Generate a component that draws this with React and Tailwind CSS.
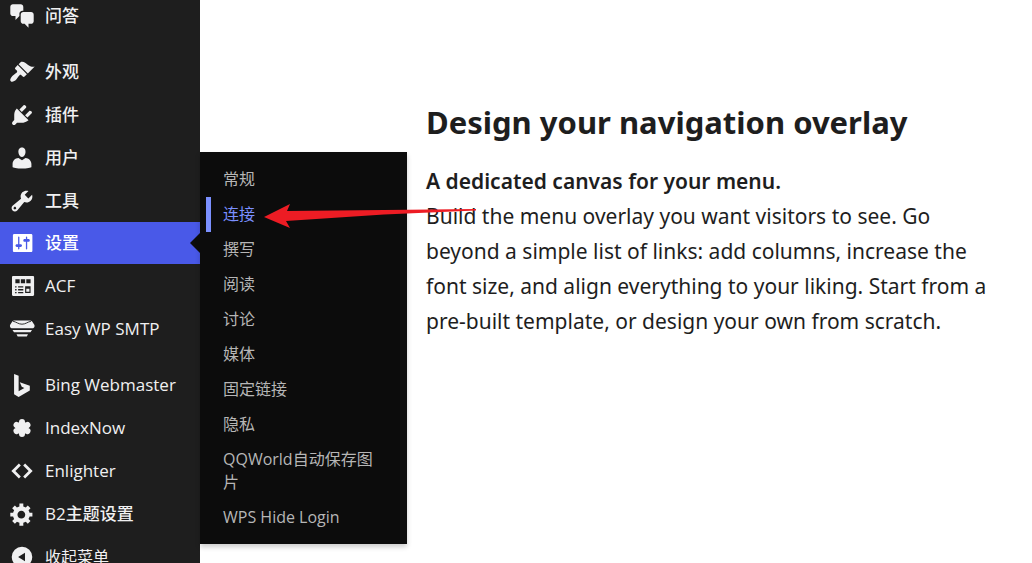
import React, { useState } from 'react';
import clsx from 'clsx';

const iconPaths = {
    chat: 'M11 6h-.82C9.07 6 8 7.2 8 8.16V10l-3 3v-3H3c-1.1 0-2-.9-2-2V3c0-1.1.9-2 2-2h6c1.1 0 2 .9 2 2v3zm0 1h6c1.1 0 2 .9 2 2v5c0 1.1-.9 2-2 2h-2v3l-3-3h-1c-1.1 0-2-.9-2-2V9c0-1.1.9-2 2-2z',
    brush: 'M14.48 11.06L7.41 3.99l1.5-1.5c.5-.56 2.3-.47 3.51.32 1.21.8 1.43 1.28 2.91 2.1 1.18.64 2.45 1.26 4.45.85zm-.71.71L6.7 4.7 4.93 6.47c-.39.39-.39 1.02 0 1.41l1.06 1.06c.39.39.39 1.03 0 1.42-.6.6-1.43 1.11-2.21 1.69-.35.26-.7.53-1.01.84C1.43 14.23.4 16.08 1.4 17.07c.99 1 2.84-.03 4.18-1.36.31-.31.58-.66.85-1.02.57-.78 1.08-1.61 1.69-2.21.39-.39 1.02-.39 1.41 0l1.06 1.06c.39.39 1.02.39 1.41 0z',
    plug: 'M13.11 4.36L9.87 7.6 8 5.73l3.24-3.24c.35-.34 1.05-.2 1.56.32.52.51.66 1.21.31 1.55zm-8 1.77l.91-1.12 9.01 9.01-1.19.84c-.71.71-2.63 1.16-3.82 1.16H6.14L4.9 17.26c-.59.59-1.54.59-2.12 0-.59-.58-.59-1.53 0-2.12l1.24-1.24v-3.88c0-1.13.4-3.19 1.09-3.89zm7.26 3.97l3.24-3.24c.34-.35 1.04-.21 1.55.31.52.51.66 1.21.31 1.55l-3.24 3.25z',
    user: 'M10 9.25c-2.27 0-2.73-3.44-2.73-3.44C7 4.02 7.82 2 9.97 2c2.16 0 2.98 2.02 2.71 3.81 0 0-.41 3.44-2.68 3.44zM7.28 10L10 11.82 12.72 10c2.39 0 4.52 2.33 4.52 4.53v2.49s-3.65 1.13-7.24 1.13c-3.65 0-7.24-1.13-7.24-1.13v-2.49c0-2.25 1.94-4.53 4.52-4.53z',
    wrench: 'M16.68 9.77c-1.34 1.34-3.3 1.67-4.95.99l-5.41 6.52c-.99.99-2.59.99-3.58 0s-.99-2.59 0-3.57l6.52-5.42c-.68-1.65-.35-3.61.99-4.95 1.28-1.28 3.12-1.62 4.72-1.06l-2.89 2.89 2.82 2.82 2.86-2.87c.53 1.58.18 3.39-1.08 4.65zM3.81 16.21c.4.39 1.04.39 1.43 0 .4-.4.4-1.04 0-1.43-.39-.4-1.03-.4-1.43 0-.39.39-.39 1.03 0 1.43z',
    settings: 'M18 16V4c0-.55-.45-1-1-1H4c-.55 0-1 .45-1 1v12c0 .55.45 1 1 1h13c.55 0 1-.45 1-1zM8 11h1c.55 0 1 .45 1 1s-.45 1-1 1H8v1.5c0 .28-.22.5-.5.5s-.5-.22-.5-.5V13H6c-.55 0-1-.45-1-1s.45-1 1-1h1V5.5c0-.28.22-.5.5-.5s.5.22.5.5V11zm5-2h-1c-.55 0-1-.45-1-1s.45-1 1-1h1V5.5c0-.28.22-.5.5-.5s.5.22.5.5V7h1c.55 0 1 .45 1 1s-.45 1-1 1h-1v5.5c0 .28-.22.5-.5.5s-.5-.22-.5-.5V9z',
    gear: 'M18 12h-2.18c-.17.7-.44 1.35-.81 1.93l1.54 1.54-2.1 2.1-1.54-1.54c-.58.36-1.23.63-1.91.79V19H8v-2.18c-.68-.16-1.33-.43-1.91-.79l-1.54 1.54-2.12-2.12 1.54-1.54c-.36-.58-.63-1.23-.79-1.91H1V9.03h2.17c.16-.7.44-1.35.8-1.94L2.43 5.55l2.1-2.1 1.54 1.54c.58-.37 1.24-.64 1.93-.81V2h3v2.18c.68.16 1.33.43 1.91.79l1.54-1.54 2.12 2.12-1.54 1.54c.36.59.64 1.24.8 1.94H18V12zm-8.5 1.5c1.66 0 3-1.34 3-3s-1.34-3-3-3-3 1.34-3 3 1.34 3 3 3z',
    acf: 'M3.2 2.300h15.200c.5 0 .9.4.9.9v13.600c0 .5-.4.9-.9.9H3.200c-.5 0-.9-.4-.9-.9V3.200c0-.5.4-.9.9-.9zM4.900 4.900v2.900h3.300V4.900zM9.100 4.900v2.900h3.300V4.900zM13.300 4.900v2.900h3.300V4.900zM4.700 10.200v1h1.100v-1zM7 10.200v1h4v-1zM4.700 12.400v1h1.100v-1zM7 12.400v1h4v-1zM4.700 14.600v1h1.100v-1zM7 14.600v1h4v-1zM12.400 10.200v5.200h4.200v-5.200zM13.300 12.200h2.400v2.300h-2.400z',
    bing: 'M3.900 1.500l3.500 1.300v12l4.400-2.500-2-1-1.500-3.500 7.700 2.800v3.700l-8.600 4.900-3.500-2z',
    code: 'M7.6 4.2l1.5 1.5L4.9 10l4.2 4.3-1.5 1.5L1.8 10zM12.4 4.2L18.2 10l-5.8 5.8-1.5-1.5 4.2-4.3-4.2-4.3z',
    collapse: 'M10 2.1a7.9 7.9 0 1 1 0 15.8a7.9 7.9 0 0 1 0-15.8zM12.3 6.800L7 10l5.300 3.200z',
};

const menuGroups = [
    [{ label: '问答', icon: 'chat' }],
    [
        { label: '外观', icon: 'brush' },
        { label: '插件', icon: 'plug' },
        { label: '用户', icon: 'user' },
        { label: '工具', icon: 'wrench' },
        { label: '设置', icon: 'settings', active: true },
        { label: 'ACF', icon: 'acf' },
        { label: 'Easy WP SMTP', icon: 'smtp' },
    ],
    [
        { label: 'Bing Webmaster', icon: 'bing' },
        { label: 'IndexNow', icon: 'indexnow' },
        { label: 'Enlighter', icon: 'code' },
        { label: 'B2主题设置', icon: 'gear' },
    ],
];

const settingsItems = ['常规', '连接', '撰写', '阅读', '讨论', '媒体', '固定链接', '隐私', 'QQWorld自动保存图片', 'WPS Hide Login'];

function MenuIcon({ name }) {
    if (name === 'smtp') {
        return (
            <svg viewBox="0 0 26 26" className="size-[26px] shrink-0" fill="currentColor" aria-hidden="true">
                <path d="M5.500 4.500h15c1.500 0 2.300.5 3 1.500l1.800 2.800c.8 1.700-.4 3.400-2.300 3.400H3.500C1.600 12.200.4 10.500 1.200 8.800L3 6c.7-1 1.200-1.500 2.500-1.500z" />
                <path d="M4 5.200c3.500.8 5.500 3 9 3s5.500-2.200 9-3" fill="none" stroke="#1e1e1e" strokeWidth="0.9" />
                <path d="M3.500 14h19.500l-1.500 2.300H5zM7.500 18.200h11.500l-1.200 2.300H8.700z" />
            </svg>
        );
    }
    if (name === 'indexnow') {
        return (
            <svg viewBox="0 0 26 26" className="size-[26px] shrink-0" fill="currentColor" stroke="currentColor" aria-hidden="true">
                <circle cx="13" cy="13" r="6" />
                <path d="M13 7v12M7.500 10l11 6M18.500 10l-11 6" strokeWidth="6" strokeLinecap="round" />
            </svg>
        );
    }
    return (
        <svg viewBox="0 0 20 20" className="size-[26px] shrink-0" fill="currentColor" fillRule="evenodd" aria-hidden="true">
            <path d={iconPaths[name]} />
        </svg>
    );
}

function SettingsFlyout() {
    const [current, setCurrent] = useState('连接');

    return (
        <ul className="absolute left-full -top-[70px] z-10 w-[207px] bg-[#0c0c0c] pt-[10px] pb-[9px] text-base leading-[23px] shadow-[0_3px_5px_rgba(0,0,0,0.2)]">
            {settingsItems.map((item) => (
                <li key={item}>
                    <a
                        href="#"
                        onClick={() => setCurrent(item)}
                        className={clsx(
                            'ml-[6px] block border-l-[5px] py-[6px] pl-3 pr-6',
                            item === current ? 'border-[#7b90ff] text-[#7b90ff]' : 'border-transparent text-[#b6b6b6] hover:text-[#7b90ff]'
                        )}
                    >
                        {item}
                    </a>
                </li>
            ))}
        </ul>
    );
}

function Sidebar() {
    return (
        <nav className="w-[200px] shrink-0 bg-[#1e1e1e] font-['Open_Sans','Noto_Sans_CJK_SC',sans-serif] text-[17px] text-[#f0f0f1]">
            <div className="-mt-[6px] flex flex-col gap-[13px]">
                {menuGroups.map((group, index) => (
                    <ul key={index}>
                        {group.map((item) => (
                            <li key={item.label} className="relative">
                                <a
                                    href="#"
                                    className={clsx(
                                        'flex items-center gap-[10px] pl-[9px] font-medium focus:text-[#7b90ff]',
                                        item.active ? 'h-[42px] bg-[#4959e8] text-white' : 'h-[43px]'
                                    )}
                                >
                                    <MenuIcon name={item.icon} />
                                    <span className={/^[A-Z][A-Za-z]/.test(item.label) ? 'font-normal' : undefined}>{item.label}</span>
                                </a>
                                {item.active && (
                                    <>
                                        <span className="absolute right-0 top-[11px] border-y-[10px] border-r-[10px] border-y-transparent border-r-[#0c0c0c]" />
                                        <SettingsFlyout />
                                    </>
                                )}
                            </li>
                        ))}
                        {index === menuGroups.length - 1 && (
                            <li>
                                <button type="button" className="flex h-[43px] w-full items-center gap-[10px] pl-[9px] text-base focus:text-[#7b90ff]">
                                    <MenuIcon name="collapse" />
                                    <span>收起菜单</span>
                                </button>
                            </li>
                        )}
                    </ul>
                ))}
            </div>
        </nav>
    );
}

function App() {
    return (
        <div className="relative flex h-screen overflow-hidden bg-white font-['Noto_Sans','Noto_Sans_CJK_SC',sans-serif]">
            <Sidebar />
            <main className="flex-1 pl-[226px] pr-8 pt-[100px] text-[#1e1e1e]">
                <h1 className="text-[31px] font-bold leading-[44px]">Design your navigation overlay</h1>
                <p className="mt-5 text-[21px] leading-[35px]">
                    <strong className="font-semibold">A dedicated canvas for your menu.</strong>
                    <br />
                    Build the menu overlay you want visitors to see. Go beyond a simple list of links: add columns, increase the font size, and align everything to your liking. Start from a pre-built template, or design your own from scratch.
                </p>
            </main>

            {/* arrow pointing at the connectors entry */}
            <svg className="pointer-events-none absolute left-[264px] top-[203px] z-20" width="213" height="26" viewBox="0 0 213 26" aria-hidden="true">
                <path d="M0 14L26 1L23 8L120 7L212 6V7.500L120 11.500L22 18L26 25z" fill="#ed1c24" />
            </svg>
        </div>
    );
}

export default App;
